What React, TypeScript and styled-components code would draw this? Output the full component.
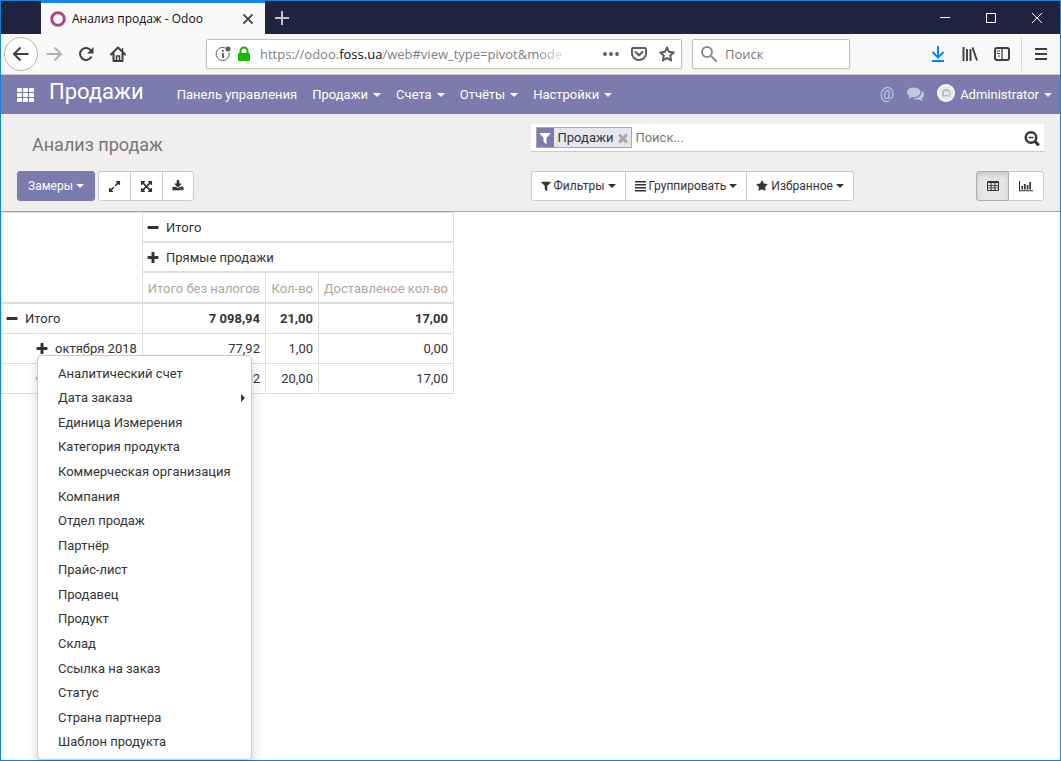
import React from "react";
import styled, { createGlobalStyle, css } from "styled-components";

const GlobalStyle = createGlobalStyle`
  *, *::before, *::after { box-sizing: border-box; }
  body { margin: 0; background: #fff; font-family: Roboto, "Liberation Sans", sans-serif; font-size: 13px; color: #333; }
  button, input { font: inherit; color: inherit; margin: 0; }
  button { background: none; border: 0; padding: 0; cursor: pointer; }
  a { color: inherit; text-decoration: none; }
  svg { display: block; flex: none; }
`;

const chromeFont = css`font-family: "Open Sans", "Noto Sans", sans-serif;`;

/* ---------- icons ---------- */

const glyphs = {
  filter:
    "M1595 295q17 41-14 70l-493 493v742q0 42-39 59-13 5-25 5-27 0-45-19l-256-256q-19-19-19-45v-486l-493-493q-31-29-14-70 17-39 59-39h1280q42 0 59 39z",
  star: "M1728 647q0 22-26 48l-363 354 86 500q1 7 1 20 0 21-10.5 35.5t-30.5 14.5q-19 0-40-12l-449-236-449 236q-22 12-40 12-21 0-31.5-14.5t-10.5-35.5q0-6 2-20l86-500-364-354q-25-27-25-48 0-37 56-46l502-73 225-455q19-41 49-41t49 41l225 455 502 73q56 9 56 46z",
  plus: "M1600 736v192q0 40-28 68t-68 28h-416v416q0 40-28 68t-68 28h-192q-40 0-68-28t-28-68v-416h-416q-40 0-68-28t-28-68v-192q0-40 28-68t68-28h416v-416q0-40 28-68t68-28h192q40 0 68 28t28 68v416h416q40 0 68 28t28 68z",
  minus:
    "M1600 736v192q0 40-28 68t-68 28h-1216q-40 0-68-28t-28-68v-192q0-40 28-68t68-28h1216q40 0 68 28t28 68z",
  times:
    "M1490 1322q0 40-28 68l-136 136q-28 28-68 28t-68-28l-294-294-294 294q-28 28-68 28t-68-28l-136-136q-28-28-28-68t28-68l294-294-294-294q-28-28-28-68t28-68l136-136q28-28 68-28t68 28l294 294 294-294q28-28 68-28t68 28l136 136q28 28 28 68t-28 68l-294 294 294 294q28 28 28 68z",
  download:
    "M1344 1344q0-26-19-45t-45-19-45 19-19 45 19 45 45 19 45-19 19-45zm256 0q0-26-19-45t-45-19-45 19-19 45 19 45 45 19 45-19 19-45zm128-224v320q0 40-28 68t-68 28h-1472q-40 0-68-28t-28-68v-320q0-40 28-68t68-28h465l135 136q58 56 136 56t136-56l136-136h464q40 0 68 28t28 68zm-325-569q17 41-14 70l-448 448q-18 19-45 19t-45-19l-448-448q-31-29-14-70 17-39 59-39h256v-448q0-26 19-45t45-19h256q26 0 45 19t19 45v448h256q42 0 59 39z",
  expand:
    "M883 1056q0 13-10 23l-332 332 144 144q19 19 19 45t-19 45-45 19h-448q-26 0-45-19t-19-45v-448q0-26 19-45t45-19 45 19l144 144 332-332q10-10 23-10t23 10l114 114q10 10 10 23zm781-864v448q0 26-19 45t-45 19-45-19l-144-144-332 332q-10 10-23 10t-23-10l-114-114q-10-10-10-23t10-23l332-332-144-144q-19-19-19-45t19-45 45-19h448q26 0 45 19t19 45z",
  arrows:
    "M1411 541l-355 355 355 355 144-144q29-31 70-14 39 17 39 59v448q0 26-19 45t-45 19h-448q-42 0-59-40-17-39 14-69l144-144-355-355-355 355 144 144q31 30 14 69-17 40-59 40h-448q-26 0-45-19t-19-45v-448q0-42 40-59 39-17 69 14l144 144 355-355-355-355-144 144q-19 19-45 19-12 0-24-5-40-17-40-59v-448q0-26 19-45t45-19h448q42 0 59 40 17 39-14 69l-144 144 355 355 355-355-144-144q-31-30-14-69 17-40 59-40h448q26 0 45 19t19 45v448q0 42-39 59-13 5-25 5-26 0-45-19z",
  comments:
    "M1408 768q0 139-94 257t-256.5 186.5-353.5 68.5q-86 0-176-16-124 88-278 128-36 9-86 16h-3q-11 0-20.5-8t-11.5-21q-1-3-1-6.5t.5-6.5 2-6l2.5-5 3.5-5.500 4-5 4.500-5 4-4.500q5-6 23-25t26-29.500 22.500-29 25-38.500 20.500-44q-124-72-195-177t-71-224q0-139 94-257t256.500-186.500 353.500-68.500 353.500 68.500 256.500 186.500 94 257zm384 256q0 120-71 224.500t-195 176.500q10 24 20.500 44t25 38.500 22.500 29 26 29.500 23 25q1 1 4 4.500t4.500 5 4 5 3.500 5.500l2.500 5 2 6 .5 6.500-1 6.500q-3 14-13 22t-22 7q-50-7-86-16-154-40-278-128-90 16-176 16-271 0-472-132 58 4 88 4 161 0 309-45t264-129q125-92 192-212t67-254q0-77-23-152 129 71 204 178t75 230z",
};

/* `width` trims the empty side bearings of narrow glyphs */
const Glyph = ({ name, size, width = size }: { name: keyof typeof glyphs; size: number; width?: number }) => {
  const w = (1792 * width) / size;
  return (
    <svg width={width} height={size} viewBox={`${(1792 - w) / 2} 0 ${w} 1792`} fill="currentColor" aria-hidden="true">
      <path d={glyphs[name]} />
    </svg>
  );
};

type LineProps = { size?: number; w?: number; children: React.ReactNode };
const Line = ({ size = 16, w = 2, children }: LineProps) => (
  <svg width={size} height={size} viewBox={`0 0 ${size} ${size}`} fill="none" stroke="currentColor" strokeWidth={w} aria-hidden="true">
    {children}
  </svg>
);

const BarsIcon = () => (
  <svg width="11" height="12" viewBox="0 0 11 12" fill="currentColor" aria-hidden="true">
    <path d="M0 1h11v1.500H0zM0 4h11v1.500H0zM0 7h11v1.500H0zM0 10h11v1.500H0z" />
  </svg>
);
const TableIcon = () => (
  <svg width="12" height="12" viewBox="0 0 12 12" fill="currentColor" aria-hidden="true">
    <path fillRule="evenodd" d="M1 1h10q1 0 1 1v8q0 1-1 1H1q-1 0-1-1V2q0-1 1-1zM1 3v2h2.6V3zM4.6 3v2h2.8V3zM8.4 3v2H11V3zM1 5.8v1.7h2.6V5.8zM4.6 5.8v1.7h2.8V5.8zM8.4 5.8v1.7H11V5.8zM1 8.3V10h2.6V8.3zM4.6 8.3V10h2.8V8.3zM8.4 8.3V10H11V8.3z" />
  </svg>
);
const ChartIcon = () => (
  <svg width="14" height="12" viewBox="0 0 14 12" fill="currentColor" aria-hidden="true">
    <path d="M0 1h1v9.3h13v1H0zM2.4 6h1.7v3.4H2.4zM5 4h1.7v5.4H5zM7.7 5h1.7v4.4H7.7zM10.3 2H12v7.4h-1.7z" />
  </svg>
);
const AppsIcon = () => (
  <svg width="17" height="14" viewBox="0 0 17 14" fill="currentColor" aria-hidden="true">
    {[0, 5, 10].map((y) => [0, 6, 12].map((x) => <rect key={`${x}-${y}`} x={x} y={y} width="5" height="4" rx="0.8" />))}
  </svg>
);
const ZoomOutIcon = () => (
  <Line size={16} w={2.4}>
    <circle cx="7" cy="7.500" r="5.300" />
    <path d="M4.500 7.500h5" strokeWidth="1.500" />
    <path d="M11 11.500l3.800 3.800" strokeWidth="3" />
  </Line>
);
const AvatarIcon = () => (
  <svg width="18" height="18" viewBox="0 0 18 18" aria-hidden="true">
    <circle cx="9" cy="9" r="9" fill="#fff" />
    <circle cx="9" cy="9" r="7.500" fill="#ececec" />
    <path d="M5 6h2l1-1h3l1 1h1.500v6.500H5z" fill="#bdbdbd" />
    <rect x="7" y="7.500" width="5" height="3.500" fill="#efefef" />
    <path d="M5 5l8.500 8" stroke="#d5d5d5" />
  </svg>
);

const Caret = styled.span`
  width: 0;
  height: 0;
  border: 4px solid transparent;
  border-top-color: currentColor;
  border-bottom: 0;
`;

/* ---------- browser window ---------- */

const Window = styled.div`
  display: flex;
  flex-direction: column;
  min-height: 100vh;
  border: 1px solid #1883d7;
  background: #fff;
`;
const TabStrip = styled.header`
  ${chromeFont}
  display: flex;
  height: 33px;
  padding-left: 40px;
  background: #202340;
  color: #fff;
`;
const Tab = styled.div`
  display: flex;
  align-items: center;
  width: 224px;
  padding: 0 9px;
  border-top: 2px solid #0a84ff;
  background: #f9f9fa;
  color: #0c0c0d;
  font-size: 12px;
  & > span { flex: 1; margin-left: 6px; white-space: nowrap; }
`;
const StripButton = styled.button<{ $w: number }>`
  display: flex;
  align-items: center;
  justify-content: center;
  width: ${(p) => p.$w}px;
`;
const Spacer = styled.div<{ $w?: number }>`
  ${(p) => (p.$w ? `width: ${p.$w}px;` : "flex: 1;")}
`;
const Toolbar = styled.div`
  ${chromeFont}
  display: flex;
  align-items: center;
  height: 41px;
  padding-left: 3px;
  border-bottom: 1px solid #ccc;
  background: #f9f9fa;
  color: #4a4a4f;
`;
const ToolButton = styled.button<{ $dim?: boolean; $blue?: boolean }>`
  display: flex;
  align-items: center;
  justify-content: center;
  width: 32px;
  height: 34px;
  color: ${(p) => (p.$dim ? "#b4b4b6" : p.$blue ? "#0a84ff" : "#3f3f43")};
`;
const BackButton = styled(ToolButton)`
  width: 34px;
  border: 1px solid #b5b5b8;
  border-radius: 50%;
  background: #fff;
`;
const Field = styled.div<{ $w?: number }>`
  display: flex;
  align-items: center;
  gap: 12px;
  ${(p) => (p.$w ? `width: ${p.$w}px;` : "flex: 1;")}
  min-width: 0;
  height: 30px;
  margin-right: 10px;
  padding: 0 6px 0 8px;
  border: 1px solid #c0c0c2;
  border-radius: 2px;
  background: #fff;
  box-shadow: 0 1px 4px rgba(0, 0, 0, 0.06);
  color: #5d5d61;
`;
const Url = styled.div`
  flex: 1;
  white-space: nowrap;
  font-size: 13px;
  color: #808084;
  b { font-weight: 400; color: #0c0c0d; }
`;
const UrlTail = styled.span`
  background: linear-gradient(to right, #808084, #e4e4e6);
  background-clip: text;
  color: transparent;
`;
const Identity = styled.div`
  display: flex;
  align-items: center;
  gap: 5px;
  margin-right: -4px;
`;
const TextInput = styled.input`
  flex: 1;
  min-width: 0;
  width: 0;
  padding: 0;
  border: 0;
  outline: 0;
  background: transparent;
  &::placeholder { color: #777; opacity: 1; }
`;
const BrowserSearch = styled(Field)`
  gap: 8px;
  margin-right: 0;
`;
const Divider = styled.div`
  width: 1px;
  height: 34px;
  margin: 0 3px;
  background: #d7d7db;
`;

/* ---------- application ---------- */

const NavBar = styled.nav`
  display: flex;
  align-items: center;
  height: 39px;
  padding: 0 8px 0 16px;
  background: #7c7bad;
  color: #fff;
`;
const Brand = styled.a`
  margin: 0 33px 6px 15px;
  font-size: 22px;
  line-height: 26px;
`;
const NavItems = styled.div`
  display: flex;
  gap: 15px;
`;
const NavLink = styled.a`
  display: flex;
  align-items: center;
  gap: 5px;
  white-space: nowrap;
`;
const UserLink = styled(NavLink)`
  svg { margin-bottom: 4px; }
`;
const Systray = styled.div`
  display: flex;
  align-items: center;
  gap: 13px;
  margin-left: auto;
`;
const TrayButton = styled.button`
  display: flex;
  padding-bottom: 2px;
  font-size: 16px;
  line-height: 18px;
  color: #c6c6de;
`;

const ControlPanel = styled.section`
  display: grid;
  grid-template-columns: 1fr 1fr;
  row-gap: 19px;
  align-items: center;
  padding: 10px 16px;
  border-bottom: 1px solid #a8a8a8;
  background: #f0eeee;
`;
const Title = styled.h1`
  margin: 10px 0 0 15px;
  font-size: 18px;
  line-height: 20px;
  height: 16px;
  font-weight: 400;
  color: #777;
`;
const SearchView = styled.div`
  display: flex;
  align-items: center;
  height: 28px;
  padding: 0 4px 0 5px;
  border-bottom: 1px solid #ccc;
  background: #fff;
`;
const Facet = styled.div`
  display: flex;
  align-items: center;
  gap: 4px;
  height: 21px;
  margin-right: 3px;
  padding-right: 2px;
  border: 1px solid #afa59b;
  background: #e6e6f0;
  button { color: #afa59b; }
`;
const FacetIcon = styled.span`
  display: flex;
  align-items: center;
  justify-content: center;
  align-self: stretch;
  width: 17px;
  background: #7c7bad;
  color: #fff;
`;
const Bar = styled.div`
  display: flex;
  gap: 3px;
`;
const Group = styled.div`
  display: flex;
`;
const Button = styled.button<{ $primary?: boolean; $active?: boolean; $w?: number }>`
  display: flex;
  align-items: center;
  justify-content: center;
  gap: 3px;
  height: 30px;
  ${(p) => (p.$w ? `width: ${p.$w}px;` : p.$primary ? "padding: 0 10px;" : "padding: 0 9px;")}
  border: 1px solid ${(p) => (p.$primary ? "#7c7bad" : p.$active ? "#adadad" : "#ccc")};
  border-radius: 3px;
  background: ${(p) => (p.$primary ? "#7c7bad" : p.$active ? "#e6e6e6" : "#fff")};
  box-shadow: ${(p) => (p.$active ? "inset 0 3px 5px rgba(0, 0, 0, 0.125)" : "none")};
  color: ${(p) => (p.$primary ? "#fff" : "#333")};
  font-size: 12px;
  white-space: nowrap;
  ${Group} > &:not(:first-child) { margin-left: -1px; border-top-left-radius: 0; border-bottom-left-radius: 0; }
  ${Group} > &:not(:last-child) { border-top-right-radius: 0; border-bottom-right-radius: 0; }
  ${(p) => p.$active && "position: relative;"}
`;

/* ---------- pivot ---------- */

const Pivot = styled.table`
  width: 453px;
  table-layout: fixed;
  border-spacing: 0;
  border: 1px solid #ddd;
  border-width: 1px 0 0 1px;
  line-height: 18px;
  th, td {
    height: 30px;
    padding: 0 5px 0 4px;
    border: 0 solid #ddd;
    border-width: 0 1px 1px 0;
    font-weight: 400;
    text-align: left;
    white-space: nowrap;
  }
  thead th { padding-top: 2px; border-bottom-width: 2px; }
  td { text-align: right; }
`;
const Measure = styled.th`
  color: #afa59b;
  ${Pivot} && { height: 31px; text-align: right; }
`;
const TotalRow = styled.tr`
  && td { font-weight: 700; }
`;
const HeaderToggle = styled.button<{ $indent?: boolean }>`
  display: flex;
  align-items: center;
  gap: 7px;
  margin-left: ${(p) => (p.$indent ? 30 : 0)}px;
`;
const MenuAnchor = styled.div`
  position: relative;
`;
const Menu = styled.ul`
  position: absolute;
  z-index: 10;
  top: 15px;
  left: 31px;
  display: grid;
  grid-auto-rows: 1fr;
  width: 215px;
  height: 405px;
  margin: 0;
  padding: 6px 0 4px;
  list-style: none;
  border: 1px solid #ccc;
  border-radius: 4px;
  background: #fff;
  box-shadow: 0 6px 12px rgba(0, 0, 0, 0.175);
`;
const MenuLink = styled.a`
  display: flex;
  align-items: center;
  justify-content: space-between;
  height: 100%;
  padding: 0 6px 0 20px;
`;
const SubCaret = styled.span`
  border: 4px solid transparent;
  border-left-color: currentColor;
  border-right: 0;
`;

const fields = [
  "Аналитический счет", "Дата заказа", "Единица Измерения", "Категория продукта",
  "Коммерческая организация", "Компания", "Отдел продаж", "Партнёр", "Прайс-лист",
  "Продавец", "Продукт", "Склад", "Ссылка на заказ", "Статус", "Страна партнера", "Шаблон продукта",
];

type ToggleProps = { open?: boolean; indent?: boolean; label?: string; children?: React.ReactNode };
const Toggle = ({ open, indent, label, children }: ToggleProps) => (
  <HeaderToggle $indent={indent} aria-expanded={!!open} aria-label={label}>
    <Glyph name={open ? "minus" : "plus"} size={14} width={12} />
    {children}
  </HeaderToggle>
);

const BrowserChrome = () => (
  <>
    <TabStrip>
      <Tab>
        <Line w={3}><circle cx="8" cy="8" r="6.300" stroke="#a24689" /></Line>
        <span>Анализ продаж - Odoo</span>
        <StripButton $w={16} aria-label="Закрыть вкладку">
          <Line size={12} w={1.8}><path d="M1.500 1.500l9 9M10.500 1.500l-9 9" stroke="#4a4a4f" /></Line>
        </StripButton>
      </Tab>
      <StripButton $w={34} aria-label="Новая вкладка">
        <Line size={14}><path d="M7 0v14M0 7h14" stroke="#c2c3cc" /></Line>
      </StripButton>
      <Spacer />
      <StripButton $w={46} aria-label="Свернуть">
        <Line size={10} w={1}><path d="M0 4.500h10" /></Line>
      </StripButton>
      <StripButton $w={46} aria-label="Развернуть">
        <Line size={10} w={1}><path d="M.5.5h9v9h-9z" /></Line>
      </StripButton>
      <StripButton $w={46} aria-label="Закрыть">
        <Line size={10} w={1}><path d="M0 0l10 10M10 0L0 10" /></Line>
      </StripButton>
    </TabStrip>
    <Toolbar>
      <BackButton aria-label="Назад">
        <Line><path d="M1 8h14.500M7.500 1.500L1 8l6.500 6.500" strokeLinejoin="round" /></Line>
      </BackButton>
      <ToolButton $dim aria-label="Вперёд">
        <Line><path d="M15 8H.5M8.500 1.500L15 8l-6.500 6.500" strokeLinejoin="round" /></Line>
      </ToolButton>
      <ToolButton aria-label="Обновить">
        <Line><path d="M13.500 10.500A6 6 0 1 1 13 4.500" /><path d="M15.500 1v6.500H9z" fill="currentColor" stroke="none" /></Line>
      </ToolButton>
      <ToolButton aria-label="Домой">
        <Line><path d="M1 8.500L8 1.500l7 7M3.500 7v8h9V7" strokeLinejoin="round" strokeLinecap="round" /><path d="M6.500 15v-5h3v5M12.500 2v3" strokeWidth="1.500" /></Line>
      </ToolButton>
      <Spacer $w={72} />
      <Field>
        <Identity>
          <Line w={1}>
            <path d="M10.500 2A6.600 6.600 0 1 0 14.200 7" />
            <path d="M8 7v5M8 4v1.700" strokeWidth="1.800" />
            <circle cx="13" cy="3" r="2.500" fill="currentColor" stroke="none" />
          </Line>
          <Line><rect x="2" y="7" width="12" height="8" rx="1" fill="#12bc00" stroke="none" /><path d="M4.500 8V5a3.500 3.500 0 0 1 7 0v3" stroke="#12bc00" /></Line>
        </Identity>
        <Url>https://odoo.<b>foss.ua</b>/web#view_type=pivot&amp;m<UrlTail>ode</UrlTail></Url>
        <Line><g fill="currentColor" stroke="none"><circle cx="2" cy="8" r="1.900" /><circle cx="8" cy="8" r="1.900" /><circle cx="14" cy="8" r="1.900" /></g></Line>
        <Line><path d="M2 2h12q1 0 1 1v4.500a7 6.500 0 0 1-14 0V3q0-1 1-1z" /><path d="M4.500 6L8 9.300 11.500 6" strokeLinecap="round" /></Line>
        <Line><path d="M8 1.500l2 4.300 4.700.6-3.500 3.200.9 4.800L8 12l-4.100 2.400.9-4.800L1.300 6.400 6 5.800z" strokeLinejoin="round" /></Line>
      </Field>
      <BrowserSearch $w={158}>
        <Line><circle cx="6" cy="6" r="5" stroke="#8d8d90" /><path d="M10 10l6 6" stroke="#8d8d90" /></Line>
        <TextInput aria-label="Поиск в интернете" placeholder="Поиск" />
      </BrowserSearch>
      <Spacer $w={72} />
      <ToolButton $blue aria-label="Загрузки">
        <Line><path d="M8 0v11M2.500 6L8 11.500 13.500 6M2 15h12" /></Line>
      </ToolButton>
      <ToolButton aria-label="Библиотека">
        <Line><path d="M1.500 1v14M5 3v12M8.500 3v12M10.500 1.500L15 14.500" strokeWidth="1.900" /></Line>
      </ToolButton>
      <ToolButton aria-label="Боковая панель">
        <Line><rect x="1" y="2" width="14" height="12" rx="2" /><path d="M8 2v12" strokeWidth="1.300" /><path d="M3 5h3M3 7.500h3M4 10h2" strokeWidth="1" /></Line>
      </ToolButton>
      <Divider />
      <ToolButton aria-label="Меню">
        <Line size={12}><path d="M0 1h12M0 6h12M0 11h12" /></Line>
      </ToolButton>
      <Spacer $w={3} />
    </Toolbar>
  </>
);

const Nav = () => (
  <NavBar>
    <a href="#apps" aria-label="Приложения"><AppsIcon /></a>
    <Brand href="#sales">Продажи</Brand>
    <NavItems>
      <NavLink href="#dashboard">Панель управления</NavLink>
      {["Продажи", "Счета", "Отчёты", "Настройки"].map((t) => (
        <NavLink key={t} href="#menu">{t}<Caret /></NavLink>
      ))}
    </NavItems>
    <Systray>
      <TrayButton>@</TrayButton>
      <TrayButton aria-label="Сообщения"><Glyph name="comments" size={17} /></TrayButton>
      <UserLink href="#user"><AvatarIcon />Administrator<Caret /></UserLink>
    </Systray>
  </NavBar>
);

export default function App() {
  return (
    <Window>
      <GlobalStyle />
      <BrowserChrome />
      <Nav />
      <ControlPanel>
        <Title>Анализ продаж</Title>
        <SearchView>
          <Facet>
            <FacetIcon><Glyph name="filter" size={14} /></FacetIcon>
            Продажи
            <button aria-label="Убрать фильтр"><Glyph name="times" size={14} width={12} /></button>
          </Facet>
          <TextInput aria-label="Поиск" placeholder="Поиск..." />
          <button aria-label="Расширенный поиск"><ZoomOutIcon /></button>
        </SearchView>
        <Bar>
          <Button $primary>Замеры <Caret /></Button>
          <Group>
            <Button $w={33} aria-label="Поменять оси"><Glyph name="expand" size={13} /></Button>
            <Button $w={33} aria-label="Развернуть все"><Glyph name="arrows" size={13} /></Button>
            <Button $w={32} aria-label="Скачать"><Glyph name="download" size={12} /></Button>
          </Group>
        </Bar>
        <Bar>
          <Group>
            <Button><Glyph name="filter" size={12} width={10} />Фильтры<Caret /></Button>
            <Button><BarsIcon />Группировать<Caret /></Button>
            <Button><Glyph name="star" size={12} />Избранное<Caret /></Button>
          </Group>
          <Spacer />
          <Group>
            <Button $w={33} $active aria-label="Сводная таблица"><TableIcon /></Button>
            <Button $w={36} aria-label="График"><ChartIcon /></Button>
          </Group>
        </Bar>
      </ControlPanel>
      <main>
        <Pivot>
          <colgroup>
            <col style={{ width: 141 }} />
            <col style={{ width: 123 }} />
            <col style={{ width: 53 }} />
            <col />
          </colgroup>
          <thead>
            <tr>
              <th rowSpan={3} />
              <th colSpan={3}><Toggle open>Итого</Toggle></th>
            </tr>
            <tr>
              <th colSpan={3}><Toggle>Прямые продажи</Toggle></th>
            </tr>
            <tr>
              <Measure>Итого без налогов</Measure>
              <Measure>Кол-во</Measure>
              <Measure>Доставленое кол-во</Measure>
            </tr>
          </thead>
          <tbody>
            <TotalRow>
              <th><Toggle open>Итого</Toggle></th>
              <td>7 098,94</td>
              <td>21,00</td>
              <td>17,00</td>
            </TotalRow>
            <tr>
              <th>
                <MenuAnchor>
                  <Toggle indent>октября 2018</Toggle>
                  <Menu>
                    {fields.map((f) => (
                      <li key={f}>
                        <MenuLink href="#group">{f}{f === "Дата заказа" && <SubCaret />}</MenuLink>
                      </li>
                    ))}
                  </Menu>
                </MenuAnchor>
              </th>
              <td>77,92</td>
              <td>1,00</td>
              <td>0,00</td>
            </tr>
            <tr>
              <th><Toggle indent label="Развернуть строку" /></th>
              <td>7 021,02</td>
              <td>20,00</td>
              <td>17,00</td>
            </tr>
          </tbody>
        </Pivot>
      </main>
    </Window>
  );
}
